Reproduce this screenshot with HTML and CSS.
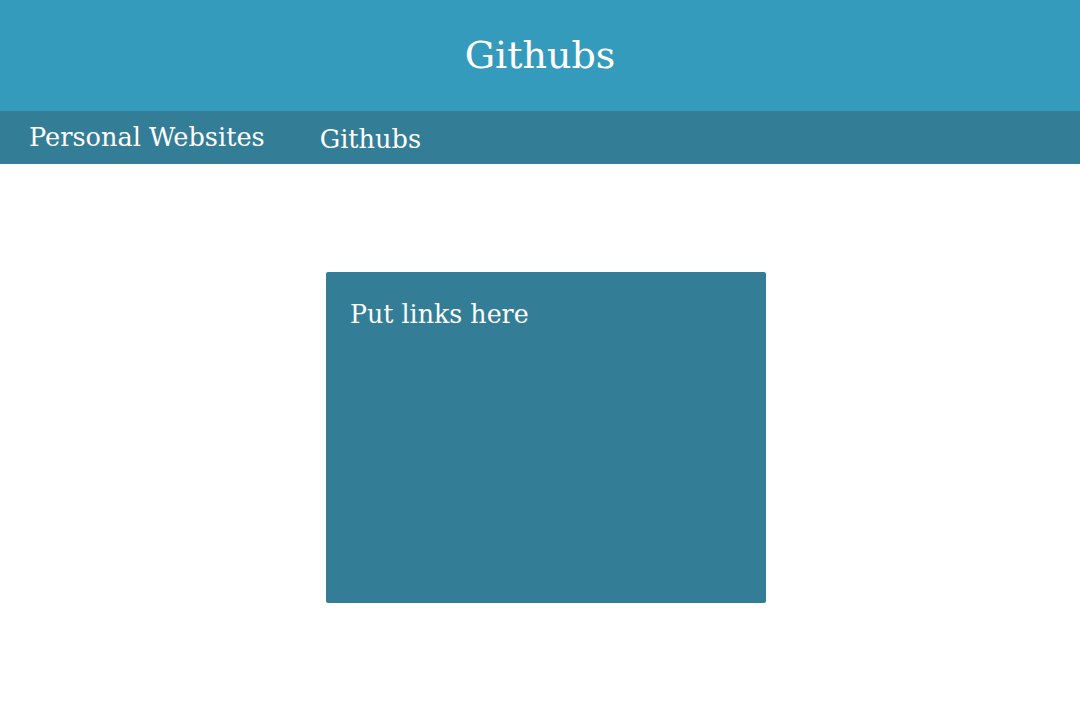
FILE: index.html
```html
<!DOCTYPE html>
<html>
<head>
<meta charset="utf-8">
<title>Githubs</title>
<link rel="stylesheet" href="styles.css">
</head>
<body>
<header class="site-header">
  <h1 class="site-title">Githubs</h1>
</header>
<nav class="site-nav">
  <a class="nav-link" href="#">Personal Websites</a>
  <a class="nav-link nav-link-active" href="#">Githubs</a>
</nav>
<main class="content">
  <section class="links-box">
    <p class="links-text">Put links here</p>
  </section>
</main>
</body>
</html>
```

FILE: styles.css
```css
html, body {
  margin: 0;
  padding: 0;
  background: #ffffff;
  font-family: "DejaVu Serif", Georgia, "Liberation Serif", serif;
  color: #ffffff;
}

.site-header {
  background: #359bbd;
  height: 111px;
  display: flex;
  align-items: center;
  justify-content: center;
}

.site-title {
  margin: 0;
  font-size: 38px;
  font-weight: normal;
  line-height: 1;
  padding-bottom: 2px;
}

.site-nav {
  background: #337d96;
  height: 53px;
  display: flex;
  align-items: center;
  padding-left: 29px;
  gap: 55px;
}

.nav-link {
  color: #ffffff;
  text-decoration: none;
  font-size: 25.6px;
  line-height: 1;
}

.nav-link-active {
  padding-top: 4px;
}

.content {
  display: flex;
  justify-content: center;
  padding: 108px 0 0 12px;
}

.links-box {
  width: 440px;
  height: 331px;
  box-sizing: border-box;
  background: #337d96;
  border-radius: 2px;
  padding: 28px 24px;
}

.links-text {
  margin: 0;
  font-size: 25.3px;
  line-height: 1.2;
}
```
